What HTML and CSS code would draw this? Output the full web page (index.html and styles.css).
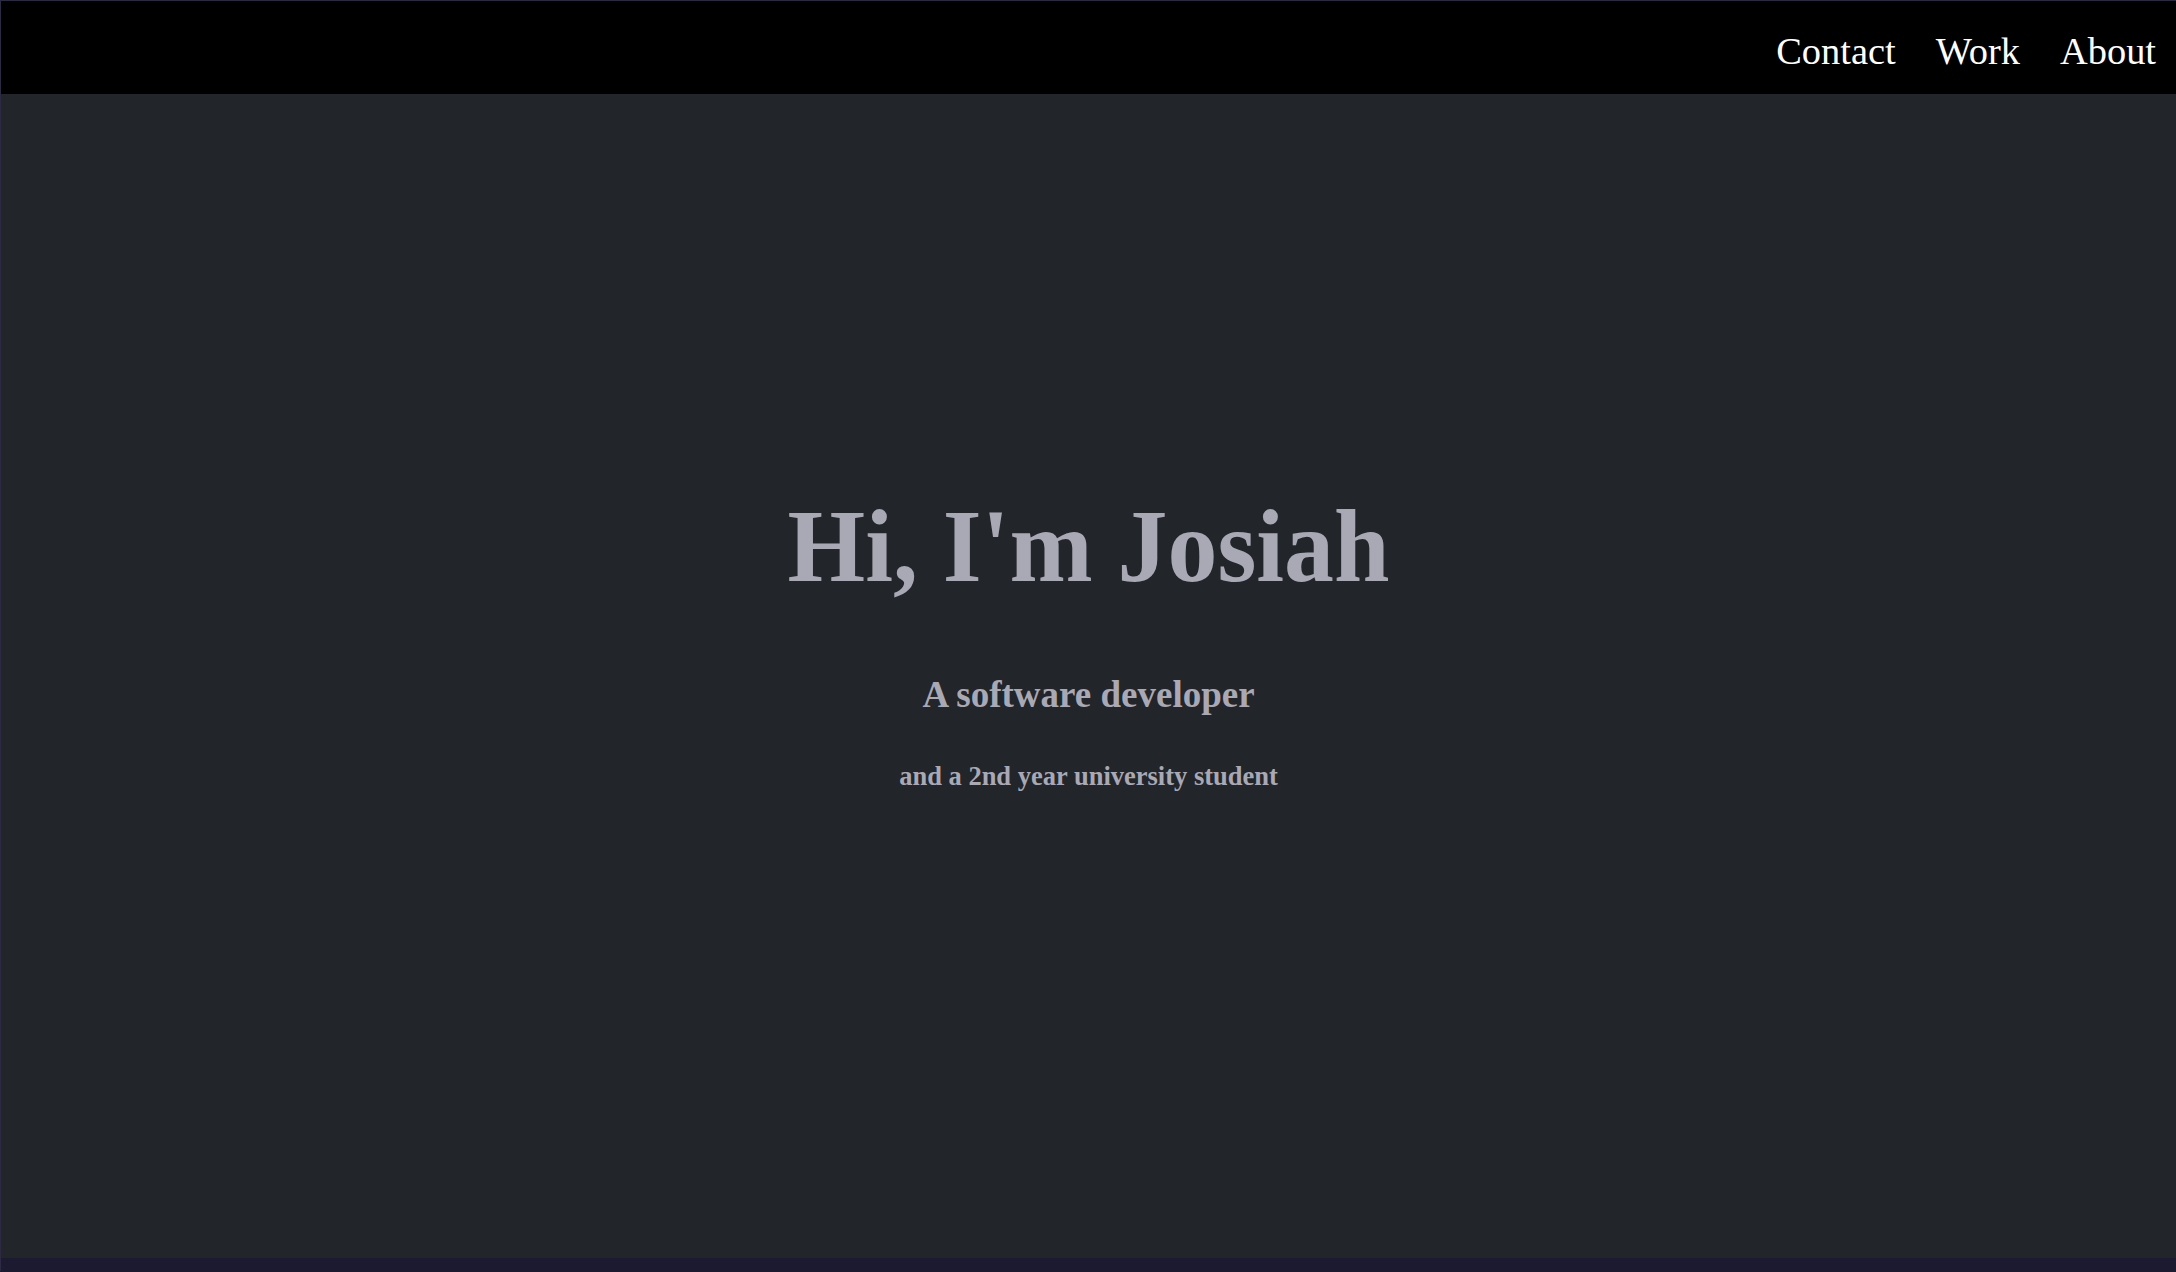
FILE: index.html
```html
<!DOCTYPE html>
<html lang="en">
<head>
<meta charset="utf-8">
<title>Josiah</title>
<link rel="stylesheet" href="styles.css">
</head>
<body>
<div class="page">
  <nav class="nav">
    <a class="nav-link" href="#contact">Contact</a>
    <a class="nav-link" href="#work">Work</a>
    <a class="nav-link" href="#about">About</a>
  </nav>
  <main class="hero">
    <h1 class="hero-title">Hi, I'm Josiah</h1>
    <h2 class="hero-sub">A software developer</h2>
    <h3 class="hero-note">and a 2nd year university student</h3>
  </main>
</div>
</body>
</html>
```

FILE: styles.css
```css
html, body {
  margin: 0;
  padding: 0;
  background: #1b1a30;
  height: 100%;
}

body {
  font-family: "Liberation Serif", "Times New Roman", serif;
}

.page {
  border-top: 1px solid #2c2942;
  border-left: 1px solid #2c2942;
  min-height: 1271px;
  box-sizing: border-box;
  background: #1b1a30;
}

.nav {
  height: 93px;
  box-sizing: border-box;
  background: #000000;
  display: flex;
  justify-content: flex-end;
  align-items: flex-start;
  gap: 40px;
  padding: 28px 20px 0 0;
}

.nav-link {
  color: #ffffff;
  text-decoration: none;
  font-size: 38.4px;
  line-height: normal;
}

.hero {
  height: 1164px;
  box-sizing: border-box;
  background: #222529;
  display: flex;
  flex-direction: column;
  align-items: center;
  padding-top: 400px;
  color: #a9a8b5;
}

.hero-title {
  margin: 0;
  font-size: 104px;
  line-height: 1;
  font-weight: bold;
  white-space: nowrap;
  transform: scaleX(0.96);
  transform-origin: center;
}

.hero-sub {
  margin: 78px 0 0;
  font-size: 37px;
  line-height: 1;
  font-weight: bold;
}

.hero-note {
  margin: 50px 0 0;
  font-size: 26.5px;
  line-height: 1;
  font-weight: bold;
}
```
